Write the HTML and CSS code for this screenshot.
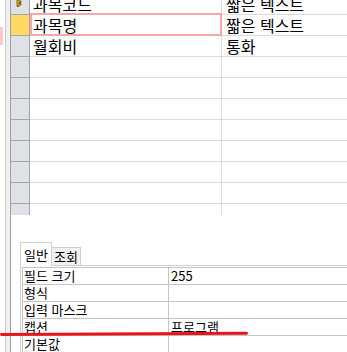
FILE: index.html
```html
<!DOCTYPE html>
<html lang="ko">
<head>
    <meta charset="UTF-8">
    <meta name="viewport" content="width=device-width, initial-scale=1.0">
    <title>테이블 디자인</title>
    <link rel="stylesheet" href="styles.css">
</head>
<body>
    <div class="window">
        <div class="gutter"><div class="gutter-mark"></div></div>
        <div class="rail"></div>
        <div class="main">
            <!-- field grid -->
            <div class="grid">
                <div class="grid-inner">
                    <div class="row">
                        <div class="sel">
                            <svg class="key" width="8" height="14" viewBox="0 0 8 14">
                                <circle cx="4" cy="3" r="2.6" fill="#e0a820" stroke="#6b4a00" stroke-width="1"/>
                                <path d="M3 5.5 V13.5 H5 V12 H7 V10.5 H5 V9.5 H7 V8 H5 V5.5 Z" fill="#e0a820" stroke="#6b4a00" stroke-width="0.8"/>
                            </svg>
                        </div>
                        <div class="name">과목코드</div>
                        <div class="type">짧은 텍스트</div>
                    </div>
                    <div class="row">
                        <div class="sel current"></div>
                        <div class="name selected">과목명</div>
                        <div class="type">짧은 텍스트</div>
                    </div>
                    <div class="row">
                        <div class="sel"></div>
                        <div class="name">월회비</div>
                        <div class="type">통화</div>
                    </div>
                    <div class="row"><div class="sel"></div><div class="name"></div><div class="type"></div></div>
                    <div class="row"><div class="sel"></div><div class="name"></div><div class="type"></div></div>
                    <div class="row"><div class="sel"></div><div class="name"></div><div class="type"></div></div>
                    <div class="row"><div class="sel"></div><div class="name"></div><div class="type"></div></div>
                    <div class="row"><div class="sel"></div><div class="name"></div><div class="type"></div></div>
                    <div class="row"><div class="sel"></div><div class="name"></div><div class="type"></div></div>
                    <div class="row"><div class="sel"></div><div class="name"></div><div class="type"></div></div>
                    <div class="row"><div class="sel"></div><div class="name"></div><div class="type"></div></div>
                </div>
            </div>

            <!-- field properties -->
            <div class="props">
                <div class="tabs">
                    <div class="tab active">일반</div>
                    <div class="tab">조회</div>
                </div>
                <div class="panel">
                    <div class="prop-table">
                        <div class="prop-row"><div class="prop-name">필드 크기</div><div class="prop-value">255</div></div>
                        <div class="prop-row"><div class="prop-name">형식</div><div class="prop-value"></div></div>
                        <div class="prop-row"><div class="prop-name">입력 마스크</div><div class="prop-value"></div></div>
                        <div class="prop-row"><div class="prop-name">캡션</div><div class="prop-value">프로그램</div></div>
                        <div class="prop-row"><div class="prop-name">기본값</div><div class="prop-value"></div></div>
                    </div>
                </div>
            </div>
        </div>
        <div class="markup"></div>
    </div>
</body>
</html>
```

FILE: styles.css
```css
* {
    box-sizing: border-box;
}

body {
    margin: 0;
    background-color: #fff;
    color: #000;
    font-family: "Noto Sans CJK KR", "Noto Sans", sans-serif;
}

.window {
    position: relative;
    display: flex;
    width: 347px;
    height: 352px;
    overflow: hidden;
}

.gutter {
    width: 5px;
    flex-shrink: 0;
}

.gutter-mark {
    margin-top: 27px;
    width: 3px;
    height: 18px;
    background-color: #fcc8c8;
}

.rail {
    width: 6px;
    flex-shrink: 0;
    background-color: #f0f0f0;
    border-left: 1px solid #c8c8c8;
    border-right: 1px solid #a0a0a0;
}

.main {
    flex: 1;
    min-width: 0;
}

/* field grid */
.grid {
    height: 215px;
    overflow: hidden;
}

.grid-inner {
    margin-top: -6px;
}

.row {
    display: flex;
    height: 21px;
    font-size: 16px;
    line-height: 20px;
}

.sel {
    width: 19px;
    flex-shrink: 0;
    background-color: #dee2e7;
    border-right: 1px solid #a5a5a5;
    border-bottom: 1px solid #a5a5a5;
}

.sel.current {
    background-color: #ffd966;
}

.key {
    display: block;
    margin: -1px 0 0 3px;
}

.name {
    position: relative;
    width: 192px;
    flex-shrink: 0;
    padding-left: 3px;
    border-right: 1px solid #d5dbe5;
    border-bottom: 1px solid #d5dbe5;
    white-space: nowrap;
}

.name.selected::after {
    content: "";
    position: absolute;
    top: -2px;
    left: 0;
    right: -1px;
    bottom: -1px;
    border: 2px solid #f4a8ae;
}

.type {
    flex: 1;
    padding-left: 4px;
    border-bottom: 1px solid #d5dbe5;
    white-space: nowrap;
}

/* field properties */
.props {
    padding: 28px 0 0 9px;
    font-size: 13px;
    line-height: 16px;
}

.tabs {
    display: flex;
    align-items: flex-end;
    height: 23px;
    border-bottom: 1px solid #d0d0d0;
}

.tab {
    height: 18px;
    padding: 0 2px;
    background-color: #f0f0f0;
    border: 1px solid #d0d0d0;
    border-bottom: none;
    border-left: none;
    line-height: 17px;
    white-space: nowrap;
}

.tab.active {
    height: 24px;
    margin-bottom: -1px;
    padding: 3px 3px 0 3px;
    background-color: #fff;
    border-left: 1px solid #d0d0d0;
}

.panel {
    border-left: 1px solid #d0d0d0;
    padding: 1px 0 0 1px;
}

.prop-table {
    border-left: 1px solid #c4c4c4;
    border-top: 1px solid #c4c4c4;
}

.prop-row {
    display: flex;
    height: 17px;
}

.prop-name {
    width: 146px;
    flex-shrink: 0;
    padding-left: 1px;
    border-right: 1px solid #c4c4c4;
    border-bottom: 1px solid #c4c4c4;
    white-space: nowrap;
}

.prop-value {
    flex: 1;
    padding-left: 2px;
    border-bottom: 1px solid #c4c4c4;
    white-space: nowrap;
}

/* hand-drawn red underline over the sheet */
.markup {
    position: absolute;
    left: 0;
    top: 333px;
    width: 248px;
    height: 3px;
    border-radius: 2px;
    background-color: #e8141c;
    transform: rotate(-0.3deg);
    transform-origin: left center;
}
```
